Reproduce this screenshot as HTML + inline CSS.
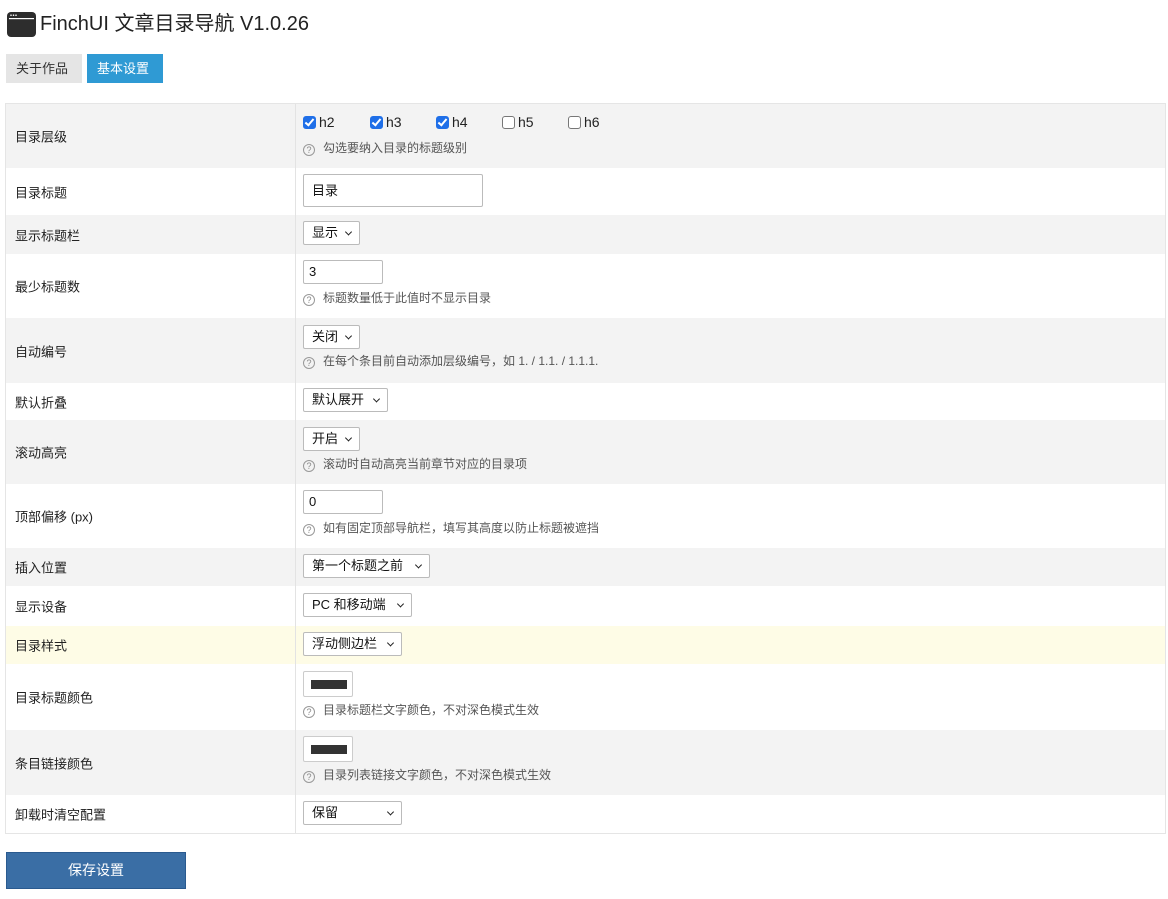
<!DOCTYPE html>
<html><head><meta charset="utf-8"><style>
*{box-sizing:border-box;margin:0;padding:0}
body{width:1168px;height:899px;background:#fff;font-family:"Liberation Sans","Noto Sans CJK SC",sans-serif;color:#222;position:relative;overflow:hidden;font-size:14px}
.a{position:absolute}
.title{left:40px;top:9px;font-size:20px;color:#222;line-height:30px}
.tab{top:54px;height:29px;line-height:29px;font-size:13px;padding:0 10px}
.tbl{left:5px;top:103px;width:1161px;height:731px;border:1px solid #e5e5e5}
.row{position:absolute;left:0;width:1159px}
.row .lb{position:absolute;left:9px;top:50%;transform:translateY(-50%);font-size:13px;color:#222}
.row .div{position:absolute;left:289px;top:0;bottom:0;border-left:1px solid #e3e3e3}
.g{background:#f3f3f3}.y{background:#fefce6}
.sel,.inp{position:absolute;left:303px;background:#fff;border:1px solid #bbb;font-size:13px;padding-left:8px;color:#111;border-radius:2px}
.sel::after{content:"";position:absolute;right:8px;top:50%;width:4px;height:4px;border-right:1.6px solid #222;border-bottom:1.6px solid #222;transform:translateY(-70%) rotate(45deg)}
.help{position:absolute;left:303px;font-size:12px;color:#555;line-height:16px}
.help i{display:inline-block;width:12px;height:12px;border:1px solid #999;border-radius:50%;font-style:normal;font-size:9px;line-height:10px;text-align:center;color:#888;margin-right:8px;vertical-align:-1px}
.cb{position:absolute;top:115px;font-size:14px;line-height:15px}
.cb b{display:inline-block;width:13px;height:13px;border-radius:3px;vertical-align:-2px;margin-right:3px}
.on b{background:#1f6fe8;position:relative}
.on b::after{content:"";position:absolute;left:4px;top:1px;width:3px;height:7px;border-right:2px solid #fff;border-bottom:2px solid #fff;transform:rotate(40deg)}
.off b{border:1px solid #777;background:#fff}
.sw{position:absolute;left:303px;width:50px;height:26px;border:1px solid #ccc;background:#fff;border-radius:2px}
.sw::after{content:"";position:absolute;left:7px;top:8px;width:36px;height:9px;background:#333}
</style></head><body>
<svg class="a" style="left:7px;top:12px" width="29" height="25" viewBox="0 0 29 25"><rect x="0" y="0" width="29" height="25" rx="4" fill="#2d2d2d"/><rect x="2" y="6" width="25" height="1.2" fill="#fff"/><circle cx="4" cy="3.2" r="0.8" fill="#fff"/><circle cx="6.5" cy="3.2" r="0.8" fill="#fff"/><circle cx="9" cy="3.2" r="0.8" fill="#fff"/></svg>
<div class="a title">FinchUI 文章目录导航 V1.0.26</div>
<div class="a tab" style="left:6px;width:76px;background:#e5e5e5;color:#333">关于作品</div>
<div class="a tab" style="left:87px;width:76px;background:#2f9ad4;color:#fff">基本设置</div>

<div class="a tbl">
<div class="row g" style="top:0;height:64px"><div class="lb">目录层级</div><div class="div"></div></div>
<div class="row" style="top:64px;height:47px"><div class="lb">目录标题</div><div class="div"></div></div>
<div class="row g" style="top:111px;height:39px"><div class="lb">显示标题栏</div><div class="div"></div></div>
<div class="row" style="top:150px;height:64px"><div class="lb">最少标题数</div><div class="div"></div></div>
<div class="row g" style="top:214px;height:65px"><div class="lb">自动编号</div><div class="div"></div></div>
<div class="row" style="top:279px;height:37px"><div class="lb">默认折叠</div><div class="div"></div></div>
<div class="row g" style="top:316px;height:64px"><div class="lb">滚动高亮</div><div class="div"></div></div>
<div class="row" style="top:380px;height:64px"><div class="lb">顶部偏移 (px)</div><div class="div"></div></div>
<div class="row g" style="top:444px;height:38px"><div class="lb">插入位置</div><div class="div"></div></div>
<div class="row" style="top:482px;height:40px"><div class="lb">显示设备</div><div class="div"></div></div>
<div class="row y" style="top:522px;height:38px"><div class="lb">目录样式</div><div class="div"></div></div>
<div class="row" style="top:560px;height:66px"><div class="lb">目录标题颜色</div><div class="div"></div></div>
<div class="row g" style="top:626px;height:65px"><div class="lb">条目链接颜色</div><div class="div"></div></div>
<div class="row" style="top:691px;height:38px"><div class="lb">卸载时清空配置</div><div class="div"></div></div>
</div>

<div class="cb on" style="left:303px"><b></b>h2</div>
<div class="cb on" style="left:370px"><b></b>h3</div>
<div class="cb on" style="left:436px"><b></b>h4</div>
<div class="cb off" style="left:502px"><b></b>h5</div>
<div class="cb off" style="left:568px"><b></b>h6</div>
<div class="help" style="top:140px"><i>?</i>勾选要纳入目录的标题级别</div>

<div class="inp" style="top:174px;width:180px;height:33px;line-height:31px">目录</div>
<div class="sel" style="top:221px;width:57px;height:24px;line-height:22px">显示</div>
<div class="inp" style="top:260px;width:80px;height:24px;line-height:22px;padding-left:5px">3</div>
<div class="help" style="top:290px"><i>?</i>标题数量低于此值时不显示目录</div>
<div class="sel" style="top:325px;width:57px;height:24px;line-height:22px">关闭</div>
<div class="help" style="top:353px"><i>?</i>在每个条目前自动添加层级编号，如 1. / 1.1. / 1.1.1.</div>
<div class="sel" style="top:388px;width:85px;height:24px;line-height:22px">默认展开</div>
<div class="sel" style="top:427px;width:57px;height:24px;line-height:22px">开启</div>
<div class="help" style="top:456px"><i>?</i>滚动时自动高亮当前章节对应的目录项</div>
<div class="inp" style="top:490px;width:80px;height:24px;line-height:22px;padding-left:5px">0</div>
<div class="help" style="top:520px"><i>?</i>如有固定顶部导航栏，填写其高度以防止标题被遮挡</div>
<div class="sel" style="top:554px;width:127px;height:24px;line-height:22px">第一个标题之前</div>
<div class="sel" style="top:593px;width:109px;height:24px;line-height:22px">PC 和移动端</div>
<div class="sel" style="top:632px;width:99px;height:24px;line-height:22px">浮动侧边栏</div>
<div class="sw" style="top:671px"></div>
<div class="help" style="top:702px"><i>?</i>目录标题栏文字颜色，不对深色模式生效</div>
<div class="sw" style="top:736px"></div>
<div class="help" style="top:767px"><i>?</i>目录列表链接文字颜色，不对深色模式生效</div>
<div class="sel" style="top:801px;width:99px;height:24px;line-height:22px">保留</div>

<div class="a" style="left:6px;top:852px;width:180px;height:37px;background:#3a6ea5;border:1px solid #2a5a8f;color:#fff;text-align:center;line-height:35px;font-size:14px">保存设置</div>
</body></html>
